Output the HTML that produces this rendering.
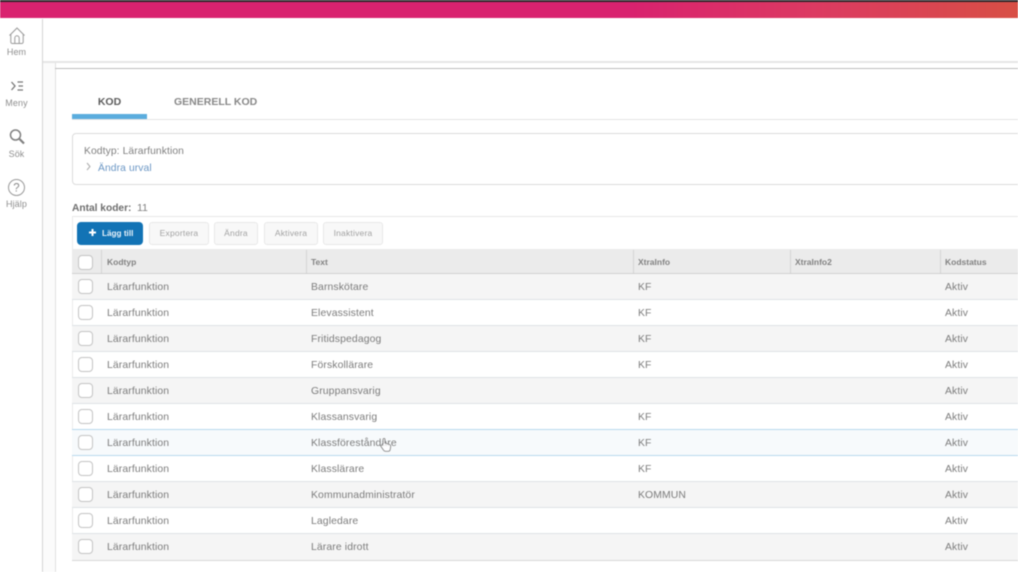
<!DOCTYPE html>
<html lang="sv"><head><meta charset="utf-8"><title>Kod</title>
<style>
html,body{margin:0;padding:0;width:1018px;height:572px;overflow:hidden;background:#fff;font-family:"Liberation Sans",sans-serif;color:#666}
.a{position:absolute;white-space:nowrap}
#wrap{position:absolute;left:0;top:0;width:1018px;height:572px;overflow:hidden;filter:blur(.6px)}
.side{font-size:9px;color:#8f8f8f;width:33px;text-align:center;left:0;letter-spacing:.1px}
.btn{top:222px;height:21px;line-height:21px;border:1px solid #e8e8e8;background:#f8f8f8;border-radius:3px;font-size:8.500px;color:#a2a2a2;text-align:center;letter-spacing:.2px}
.row{position:absolute;left:72px;width:946px;height:25px;border-bottom:1px solid #dfe3e6;font-size:10.400px;color:#7c7c7c;letter-spacing:.12px}
.row.o{background:#f5f5f5}
.row span{position:absolute;top:8px;white-space:nowrap}
.row i{position:absolute;left:6px;top:5px;width:13px;height:13px;border:1px solid #c4c4c4;border-radius:4px;background:#fff}
.h{position:absolute;top:257px;font-size:8.500px;font-weight:bold;color:#828282;white-space:nowrap}
.v{position:absolute;top:250px;width:1px;height:23px;background:#d4d4d4}
</style></head><body><div id="wrap">
<div class="a" style="left:0;top:0;width:1018px;height:2px;background:#2b2629"></div>
<div class="a" style="left:0;top:2px;width:1018px;height:16px;background:linear-gradient(90deg,#d9226f 0,#d9226f 62%,#dc3a62 80%,#d84f45 100%)"></div>

<div class="a" style="left:42px;top:19px;width:1px;height:553px;background:#d4d4d4"></div>
<div class="a" style="left:43px;top:61px;width:975px;height:2px;background:#e6e6e6"></div>
<div class="a" style="left:43px;top:63px;width:12px;height:509px;background:#fbfbfb"></div>
<div class="a" style="left:55px;top:63px;width:1px;height:509px;background:#e0e0e0"></div>
<div class="a" style="left:55px;top:68px;width:963px;height:1px;background:#bdbdbd"></div>

<svg class="a" style="left:7px;top:26px" width="20" height="20" viewBox="0 0 20 20" fill="none" stroke="#9a9a9a" stroke-width="1"><path d="M2.500 9.500 10 2l7.500 7.500M3.800 8.500V16a1.500 1.500 0 0 0 1.500 1.500h9.400a1.500 1.500 0 0 0 1.500-1.500V8.500M7.800 17.500V12a2.200 2.200 0 0 1 4.400 0v5.500"/></svg>
<div class="a side" style="top:47px">Hem</div>
<svg class="a" style="left:10px;top:80px" width="14" height="12" viewBox="0 0 14 12" fill="none" stroke="#777" stroke-width="1.300"><path d="M1.500 2 5 6 1.500 10M7.500 2h5.500M8.500 6h4.500M7.500 10h5.500"/></svg>
<div class="a side" style="top:98px">Meny</div>
<svg class="a" style="left:8px;top:128px" width="18" height="18" viewBox="0 0 18 18" fill="none" stroke="#808080" stroke-width="1.500"><circle cx="7.500" cy="7" r="5"/><path d="m11.500 11 4.500 4.500" stroke-width="2.200"/></svg>
<div class="a side" style="top:149px">Sök</div>
<svg class="a" style="left:7px;top:178px" width="19" height="19" viewBox="0 0 19 19"><circle cx="9.500" cy="9.500" r="8" fill="none" stroke="#999" stroke-width="1"/><text x="9.500" y="13.500" text-anchor="middle" font-size="11.500" font-family="Liberation Sans" fill="#8a8a8a">?</text></svg>
<div class="a side" style="top:199px">Hjälp</div>

<div class="a" style="left:72px;top:96px;width:75px;text-align:center;font-size:10.500px;font-weight:bold;color:#5c5c5c">KOD</div>
<div class="a" style="left:174px;top:96px;font-size:10.500px;font-weight:bold;color:#888">GENERELL KOD</div>
<div class="a" style="left:72px;top:119px;width:946px;height:1px;background:#e4e4e4"></div>
<div class="a" style="left:72px;top:114px;width:75px;height:5px;background:#5badde"></div>

<div class="a" style="left:72px;top:133px;width:960px;height:52px;border:1px solid #dcdcdc;border-radius:4px;box-sizing:border-box"></div>
<div class="a" style="left:84px;top:146px;font-size:10.300px;color:#808080;letter-spacing:.1px">Kodtyp: Lärarfunktion</div>
<svg class="a" style="left:85px;top:162px" width="7" height="9" viewBox="0 0 7 9" fill="none" stroke="#aaa" stroke-width="1"><path d="m2 1 3 3.500L2 8"/></svg>
<div class="a" style="left:98px;top:163px;font-size:10.300px;color:#6a96c4;letter-spacing:.1px">Ändra urval</div>

<div class="a" style="left:72px;top:203px;font-size:10.200px;font-weight:bold;color:#6e6e6e">Antal koder:</div>
<div class="a" style="left:137px;top:202px;font-size:10.500px;color:#808080">11</div>

<div class="a" style="left:72px;top:216px;width:946px;height:1px;background:#e8e8e8"></div>
<div class="a" style="left:72px;top:216px;width:1px;height:345px;background:#ebebeb"></div>
<div class="a" style="left:77px;top:222px;width:66px;height:23px;background:#1273b5;border-radius:4px"></div>
<svg class="a" style="left:88px;top:228px" width="9" height="9" viewBox="0 0 9 9"><path d="M4.500 1v7M1 4.500h7" stroke="#fff" stroke-width="2"/></svg>
<div class="a" style="left:102px;top:229px;font-size:8.200px;font-weight:bold;color:#e8f2fa">Lägg till</div>
<div class="a btn" style="left:149px;width:58px">Exportera</div>
<div class="a btn" style="left:214px;width:42px">Ändra</div>
<div class="a btn" style="left:264px;width:52px">Aktivera</div>
<div class="a btn" style="left:323px;width:58px">Inaktivera</div>

<div class="a" style="left:72px;top:249px;width:946px;height:24px;background:#ebebeb;border-bottom:1px solid #d0d0d0"></div>
<div class="a" style="left:78px;top:255px;width:13px;height:13px;border:1px solid #c4c4c4;border-radius:4px;background:#fff"></div>
<div class="v" style="left:101px"></div><div class="v" style="left:306px"></div><div class="v" style="left:633px"></div><div class="v" style="left:790px"></div><div class="v" style="left:940px"></div>
<div class="h" style="left:107px">Kodtyp</div><div class="h" style="left:311px">Text</div><div class="h" style="left:638px">XtraInfo</div><div class="h" style="left:795px">XtraInfo2</div><div class="h" style="left:945px">Kodstatus</div>

<div class="row o" style="top:274px"><i></i><span style="left:35px">Lärarfunktion</span><span style="left:239px">Barnskötare</span><span style="left:566px">KF</span><span style="left:873px">Aktiv</span></div>
<div class="row" style="top:300px"><i></i><span style="left:35px">Lärarfunktion</span><span style="left:239px">Elevassistent</span><span style="left:566px">KF</span><span style="left:873px">Aktiv</span></div>
<div class="row o" style="top:326px"><i></i><span style="left:35px">Lärarfunktion</span><span style="left:239px">Fritidspedagog</span><span style="left:566px">KF</span><span style="left:873px">Aktiv</span></div>
<div class="row" style="top:352px"><i></i><span style="left:35px">Lärarfunktion</span><span style="left:239px">Förskollärare</span><span style="left:566px">KF</span><span style="left:873px">Aktiv</span></div>
<div class="row o" style="top:378px"><i></i><span style="left:35px">Lärarfunktion</span><span style="left:239px">Gruppansvarig</span><span style="left:873px">Aktiv</span></div>
<div class="row" style="top:404px;border-bottom-color:#b9d9ee"><i></i><span style="left:35px">Lärarfunktion</span><span style="left:239px">Klassansvarig</span><span style="left:566px">KF</span><span style="left:873px">Aktiv</span></div>
<div class="row" style="top:430px;background:#f7fafc;border-bottom-color:#b9d9ee"><i></i><span style="left:35px">Lärarfunktion</span><span style="left:239px">Klassföreståndare</span><span style="left:566px">KF</span><span style="left:873px">Aktiv</span></div>
<div class="row" style="top:456px"><i></i><span style="left:35px">Lärarfunktion</span><span style="left:239px">Klasslärare</span><span style="left:566px">KF</span><span style="left:873px">Aktiv</span></div>
<div class="row o" style="top:482px"><i></i><span style="left:35px">Lärarfunktion</span><span style="left:239px">Kommunadministratör</span><span style="left:566px">KOMMUN</span><span style="left:873px">Aktiv</span></div>
<div class="row" style="top:508px"><i></i><span style="left:35px">Lärarfunktion</span><span style="left:239px">Lagledare</span><span style="left:873px">Aktiv</span></div>
<div class="row o" style="top:534px;height:26px;border-bottom-color:#d8d8d8"><i></i><span style="left:35px">Lärarfunktion</span><span style="left:239px">Lärare idrott</span><span style="left:873px">Aktiv</span></div>

<svg class="a" style="left:379px;top:437px" width="13" height="16" viewBox="0 0 13 16"><path d="M4 7V2.500a1 1 0 0 1 2 0V6l4.500 1.500c1 .4 1.300 1 1.200 2l-.5 3c-.2 1-.8 1.800-2 1.800H6.500c-1 0-1.500-.5-2-1.200L2 9.500c-.5-1 .6-1.800 1.300-1.200z" fill="#fff" fill-opacity=".8" stroke="#8a8a8a" stroke-width=".9"/></svg>
</div></body></html>
